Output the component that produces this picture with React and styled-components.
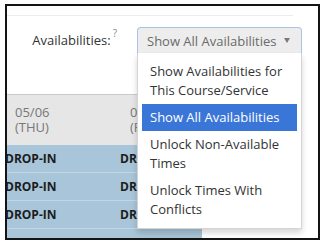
import React from "react";
import styled, { createGlobalStyle } from "styled-components";

const GlobalStyle = createGlobalStyle`
  html, body { margin: 0; padding: 0; background: #fff; }
  body { font-family: "Open Sans", "Liberation Sans", sans-serif; }
  * { box-sizing: border-box; }
`;

const Frame = styled.div`
  margin: 4px 0 0 5px;
  width: 315px;
  height: 236px;
  border: 2px solid #141414;
  overflow: hidden;
  background: #fff;
  display: flex;
  flex-direction: column;
`;

const TopRule = styled.div`
  flex-shrink: 0;
  height: 10px;
  width: 286px;
  border-bottom: 1px solid #ececec;
`;

const FilterRow = styled.div`
  flex-shrink: 0;
  display: flex;
  align-items: flex-start;
  margin-top: 11px;
  position: relative;
  z-index: 2;
`;

const LabelCell = styled.div`
  width: 130px;
  padding-right: 20px;
  text-align: right;
  font-size: 13px;
  line-height: 26px;
  color: #333;
  white-space: nowrap;
`;

const Help = styled.span`
  display: inline-block;
  vertical-align: top;
  margin-left: 2px;
  font-size: 10px;
  line-height: 12px;
  color: #8a8a8a;
`;

const SelectWrap = styled.div`
  position: relative;
  width: 165px;
`;

const SelectBox = styled.div`
  height: 26px;
  border: 1px solid #a9c2e6;
  border-bottom: none;
  border-radius: 4px 4px 0 0;
  background: #ededed;
  color: #6a6a6a;
  font-size: 13px;
  padding: 0 11px 0 9px;
  display: flex;
  align-items: center;
  justify-content: space-between;
  white-space: nowrap;
`;

const Caret = styled.span`
  width: 0;
  height: 0;
  border-left: 3px solid transparent;
  border-right: 3px solid transparent;
  border-top: 5px solid #7a7a7a;
`;

const Menu = styled.ul`
  position: absolute;
  top: 100%;
  left: 0;
  right: 0;
  margin: 0;
  padding: 5px 4px;
  list-style: none;
  background: #fff;
  border: 1px solid #d4d4d4;
  border-top: none;
  box-shadow: 0 4px 6px rgba(0, 0, 0, 0.16);
`;

const Item = styled.li`
  padding: 4px 8px;
  font-size: 13px;
  line-height: 19px;
  color: ${(p) => (p.$active ? "#fff" : "#333")};
  background: ${(p) => (p.$active ? "#3a76d8" : "transparent")};
`;

const TableViewport = styled.div`
  margin-top: 41px;
  width: 195px;
  flex: 1;
  overflow: hidden;
`;

const Grid = styled.div`
  margin-left: -6px;
  display: grid;
  grid-template-columns: repeat(2, 115px);
`;

const HeadCell = styled.div`
  height: 51px;
  background: #e6e6e6;
  border-top: 1px solid #c9c9c9;
  padding-left: 14px;
  display: flex;
  flex-direction: column;
  justify-content: center;
  font-size: 13px;
  line-height: 15px;
  color: #777;
  white-space: nowrap;
`;

const BodyCell = styled.div`
  height: 28px;
  background: #a9c5d9;
  border-bottom: 1px solid #c3d6e4;
  padding-left: 4px;
  font-size: 12px;
  font-weight: 700;
  line-height: 28px;
  color: #1c1c1c;
  white-space: nowrap;
`;

const days = [
  { date: "05/06", day: "(THU)" },
  { date: "05/07", day: "(FRI)" },
];

const items = [
  "Show Availabilities for This Course/Service",
  "Show All Availabilities",
  "Unlock Non-Available Times",
  "Unlock Times With Conflicts",
];

export default function App() {
  return (
    <>
      <GlobalStyle />
      <Frame>
        <TopRule />
        <FilterRow>
          <LabelCell>
            Availabilities:<Help>?</Help>
          </LabelCell>
          <SelectWrap>
            <SelectBox>
              <span>Show All Availabilities</span>
              <Caret />
            </SelectBox>
            <Menu>
              {items.map((t, i) => (
                <Item key={t} $active={i === 1}>
                  {t}
                </Item>
              ))}
            </Menu>
          </SelectWrap>
        </FilterRow>
        <TableViewport>
          <Grid>
            {days.map((d) => (
              <HeadCell key={d.date}>
                <span>{d.date}</span>
                <span>{d.day}</span>
              </HeadCell>
            ))}
            {Array.from({ length: 4 }).flatMap((_, r) =>
              days.map((d) => <BodyCell key={r + d.date}>DROP-IN</BodyCell>)
            )}
          </Grid>
        </TableViewport>
      </Frame>
    </>
  );
}
